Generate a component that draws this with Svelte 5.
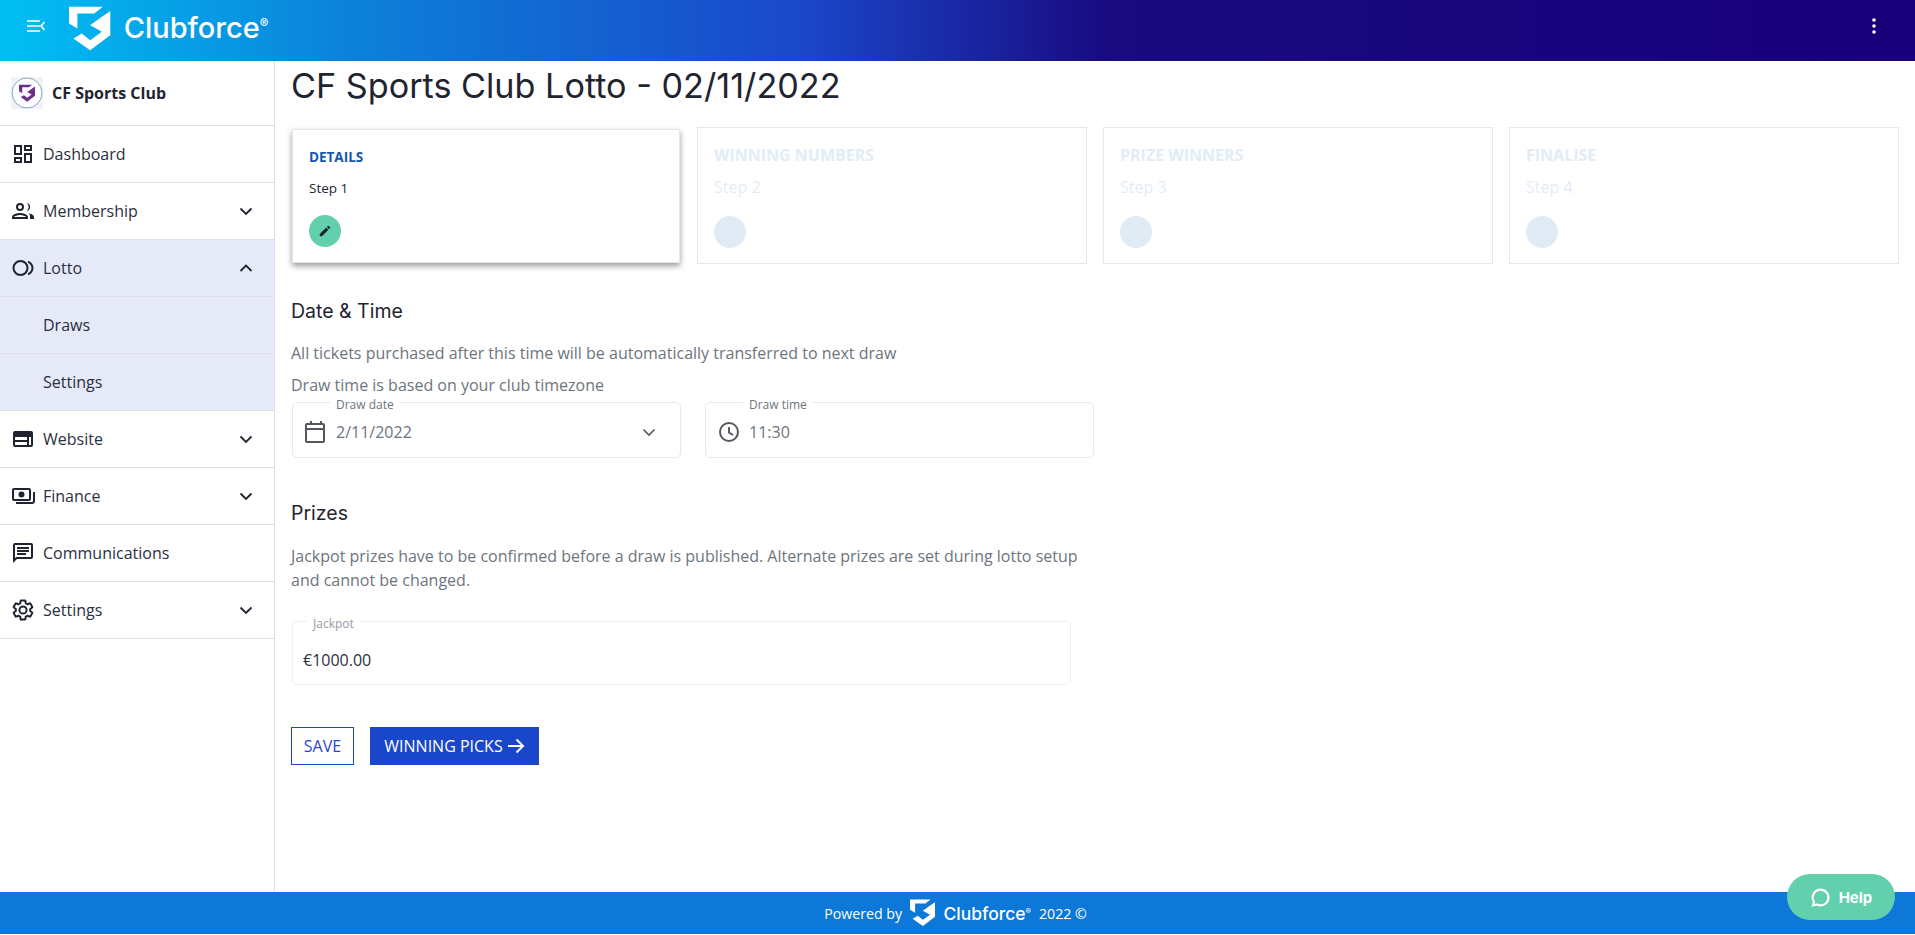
<script>
	const menu = [
		{ label: 'Dashboard', icon: 'dash' },
		{ label: 'Membership', icon: 'people', chevron: 'down' },
		{ label: 'Lotto', icon: 'lotto', chevron: 'up', active: true },
		{ label: 'Draws', sub: true, active: true },
		{ label: 'Settings', sub: true, active: true },
		{ label: 'Website', icon: 'web', chevron: 'down' },
		{ label: 'Finance', icon: 'money', chevron: 'down' },
		{ label: 'Communications', icon: 'chat' },
		{ label: 'Settings', icon: 'gear', chevron: 'down' }
	];
	const steps = [
		{ title: 'DETAILS', step: 'Step 1', current: true },
		{ title: 'WINNING NUMBERS', step: 'Step 2' },
		{ title: 'PRIZE WINNERS', step: 'Step 3' },
		{ title: 'FINALISE', step: 'Step 4' }
	];
	const shieldTop = 'M0 2H101L75 22H25V67L0 52Z';
	const shieldBottom = 'M123 15V87L63 132L13 97L38 82L63 102L98 77L63 57L98 32Z';
</script>

{#snippet logo(h)}
	<svg class="shield" height={h} width={h * 124 / 137} viewBox="0 0 124 137" fill="#fff">
		<path d={shieldTop} /><path d={shieldBottom} />
	</svg>
{/snippet}

{#snippet icon(name)}
	<svg class="icon" viewBox="0 0 24 24" fill="#1f2430">
		{#if name === 'dash'}
			<path d="M3 3h8v10H3V3zm2 2v6h4V5H5zm8-2h8v6h-8V3zm2 2v2h4V5h-4zM13 11h8v10h-8V11zm2 2v6h4v-6h-4zM3 15h8v6H3v-6zm2 2v2h4v-2H5z" />
		{:else if name === 'people'}
			<path d="M9 12a4 4 0 1 0 0-8 4 4 0 0 0 0 8zm0-6a2 2 0 1 1 0 4 2 2 0 0 1 0-4zm0 8c-2.7 0-8 1.3-8 4v2h16v-2c0-2.7-5.3-4-8-4zm-6 4c.3-.9 3.8-2 6-2s5.700 1.100 6 2H3zm13-6.100a4 4 0 0 0 0-7.800 5.900 5.900 0 0 1 0 7.800zM17.500 14.300c1.400.9 1.500 2.300 1.500 3.700v2h4v-2c0-2.200-3.300-3.400-5.500-3.700z" />
		{:else if name === 'lotto'}
			<path fill-rule="evenodd" d="M9.500 4a8 8 0 1 1 0 16 8 8 0 0 1 0-16zm0 2a6 6 0 1 0 0 12 6 6 0 0 0 0-12z" />
			<path d="M17.500 4.800c3 1.400 5 4 5 7.200s-2 5.800-5 7.200l-.9-1.800c2.200-1.100 3.900-3 3.900-5.400s-1.700-4.300-3.900-5.400l.9-1.800z" />
		{:else if name === 'web'}
			<path fill-rule="evenodd" d="M4 4h16a2 2 0 0 1 2 2v12a2 2 0 0 1-2 2H4a2 2 0 0 1-2-2V6a2 2 0 0 1 2-2zm0 6v3h12v-3H4zm0 5v3h12v-3H4zm14-5v8h2v-8h-2z" />
		{:else if name === 'money'}
			<path fill-rule="evenodd" d="M3 4h15a2 2 0 0 1 2 2v9a2 2 0 0 1-2 2H3a2 2 0 0 1-2-2V6a2 2 0 0 1 2-2zm0 2v9h15V6H3zm7.500 1.500a3 3 0 1 1 0 6 3 3 0 0 1 0-6zM22 8h2v9a3 3 0 0 1-3 3H5v-2h16a1 1 0 0 0 1-1V8z" />
		{:else if name === 'chat'}
			<path fill-rule="evenodd" d="M4 2h16a2 2 0 0 1 2 2v12a2 2 0 0 1-2 2H6l-4 4V4a2 2 0 0 1 2-2zm0 2v13.200L5.200 16H20V4H4zm2 2h12v2H6V6zm0 3h12v2H6V9zm0 3h9v2H6v-2z" />
		{:else if name === 'gear'}
			<path fill="none" stroke="#1f2430" stroke-width="2" d="M19.140 12.940c.04-.3.06-.61.06-.94 0-.32-.02-.64-.07-.94l2.030-1.580c.18-.14.23-.41.12-.61l-1.920-3.320c-.12-.22-.37-.29-.59-.22l-2.390.96c-.5-.38-1.030-.7-1.620-.94l-.36-2.540c-.04-.24-.24-.41-.48-.41h-3.840c-.24 0-.43.17-.47.41l-.36 2.540c-.59.24-1.130.57-1.620.94l-2.390-.96c-.22-.08-.47 0-.59.22L2.740 8.870c-.12.21-.08.47.12.61l2.030 1.580c-.05.3-.09.63-.09.94s.02.64.07.94l-2.030 1.580c-.18.14-.23.41-.12.61l1.920 3.320c.12.22.37.29.59.22l2.390-.96c.5.38 1.030.7 1.620.94l.36 2.540c.05.24.24.41.48.41h3.840c.24 0 .44-.17.47-.41l.36-2.540c.59-.24 1.130-.56 1.620-.94l2.390.96c.22.08.47 0 .59-.22l1.920-3.320c.12-.22.07-.47-.12-.61l-2.010-1.580zM12 15.600c-1.980 0-3.600-1.620-3.600-3.600s1.620-3.600 3.600-3.600 3.600 1.620 3.600 3.600-1.620 3.600-3.600 3.600z" />
		{/if}
	</svg>
{/snippet}

{#snippet chevron(dir)}
	<svg class="chev" viewBox="0 0 24 24" fill="none" stroke="#1f2430" stroke-width="1.800">
		<path d={dir === 'up' ? 'M6.500 15l5.500-5.500 5.500 5.500' : 'M6.500 9.500l5.500 5.500 5.500-5.500'} />
	</svg>
{/snippet}

<div class="page">
	<header class="topbar">
		<svg class="burger" viewBox="0 0 18 12" fill="none" stroke="#fff" stroke-width="1.600">
			<path d="M0 1h13M0 6h13M0 11h13M17.500 2l-3.500 4 3.500 4" />
		</svg>
		{@render logo(46)}
		<span class="brand">Clubforce<sup>®</sup></span>
		<span class="grow"></span>
		<svg class="kebab" viewBox="0 0 4 16" fill="#fff">
			<circle cx="2" cy="2" r="1.800" /><circle cx="2" cy="8" r="1.800" /><circle cx="2" cy="14" r="1.800" />
		</svg>
	</header>

	<div class="body">
		<aside class="sidebar">
			<div class="club">
				<svg class="crest" viewBox="0 0 32 32">
					<rect width="32" height="32" fill="#f3f3f6" />
					<circle cx="16" cy="16" r="15" fill="#fff" stroke="#5f8fc0" stroke-width="0.800" />
					<g transform="translate(8 7.500) scale(0.130)" fill="#6b2f8f">
						<path d={shieldTop} /><path d={shieldBottom} />
					</g>
				</svg>
				<span>CF Sports Club</span>
			</div>
			<nav>
				{#each menu as item}
					<a class="item" class:active={item.active} class:sub={item.sub} href="#top">
						{#if item.icon}{@render icon(item.icon)}{/if}
						<span class="label">{item.label}</span>
						{#if item.chevron}{@render chevron(item.chevron)}{/if}
					</a>
				{/each}
			</nav>
		</aside>

		<main class="content">
			<h1>CF Sports Club Lotto - 02/11/2022</h1>

			<div class="steps">
				{#each steps as s}
					<div class="step" class:current={s.current}>
						<div class="step-title">{s.title}</div>
						<div class="step-sub">{s.step}</div>
						<div class="dot">
							{#if s.current}
								<svg viewBox="0 0 24 24" width="14" height="14" fill="#1f2430">
									<path d="M3 17.250V21h3.750L17.800 9.940l-3.750-3.750L3 17.250zM20.700 7.040a1 1 0 0 0 0-1.410l-2.340-2.340a1 1 0 0 0-1.410 0l-1.830 1.830 3.750 3.750 1.830-1.830z" />
								</svg>
							{/if}
						</div>
					</div>
				{/each}
			</div>

			<h2 class="first">Date &amp; Time</h2>
			<p class="note">All tickets purchased after this time will be automatically transferred to next draw</p>
			<p class="note tight">Draw time is based on your club timezone</p>

			<div class="fields">
				<div class="field date">
					<span class="legend">Draw date</span>
					<svg class="ficon" viewBox="1 0 24 24" fill="#55585e">
						<path fill-rule="evenodd" d="M7 1h2v2h8V1h2v2h1a2 2 0 0 1 2 2v16a2 2 0 0 1-2 2H4a2 2 0 0 1-2-2V5a2 2 0 0 1 2-2h3V1zM4 10v11h16V10H4zm0-5v3h16V5H4z" />
					</svg>
					<span class="value">2/11/2022</span>
					<svg class="fchev" viewBox="0 0 24 24" fill="none" stroke="#55585e" stroke-width="1.600"><path d="M6.500 9.500l5.500 5.500 5.500-5.500" /></svg>
				</div>
				<div class="field time">
					<span class="legend">Draw time</span>
					<svg class="ficon" viewBox="0 0 24 24" fill="none" stroke="#55585e" stroke-width="2">
						<circle cx="12" cy="12" r="9" /><path d="M12 7v5.500l4 2.500" />
					</svg>
					<span class="value">11:30</span>
				</div>
			</div>

			<h2 class="second">Prizes</h2>
			<p class="note wrap">Jackpot prizes have to be confirmed before a draw is published. Alternate prizes are set during lotto setup and cannot be changed.</p>

			<div class="field jackpot">
				<span class="legend">Jackpot</span>
				<span class="value dark">€1000.00</span>
			</div>

			<div class="actions">
				<button class="save">SAVE</button>
				<button class="next">
					WINNING PICKS
					<svg viewBox="0 0 18 18" width="18" height="18" fill="none" stroke="#fff" stroke-width="2"><path d="M1 9h15M9.500 2.500L16 9l-6.500 6.500" /></svg>
				</button>
			</div>
		</main>
	</div>

	<footer class="footer">
		<span>Powered by</span>
		{@render logo(28)}
		<span class="foot-brand">Clubforce<sup>®</sup></span>
		<span>2022 ©</span>
	</footer>

	<button class="help">
		<svg viewBox="0 0 24 24" width="21" height="21" fill="none" stroke="#fff" stroke-width="2.400">
			<path d="M12 3a9 9 0 1 1-4 17l-4.500 1 1-4.200A9 9 0 0 1 12 3z" />
		</svg>
		Help
	</button>
</div>

<style>
	:global(body) {
		margin: 0;
		background: #fff;
		font-family: 'Open Sans', sans-serif;
		color: #1f2430;
	}

	.page {
		height: 935px;
		display: flex;
		flex-direction: column;
		overflow: hidden;
		position: relative;
	}

	.topbar {
		height: 61px;
		flex: none;
		display: flex;
		align-items: center;
		padding-left: 27px;
		padding-right: 39px;
		background: linear-gradient(90deg, #00c0f3 0%, #0c82da 18%, #1a47c9 42%, #190a80 58%, #17007a 100%);
	}

	.burger {
		width: 18px;
		height: 12px;
		margin-right: 24px;
		margin-bottom: 9px;
	}

	.topbar .shield {
		margin-bottom: 3px;
	}

	.shield {
		flex: none;
	}

	.brand {
		font-family: 'Inter', sans-serif;
		font-size: 29px;
		font-weight: 500;
		color: #fff;
		margin-left: 13px;
		margin-bottom: 5px;
		line-height: 30px;
	}

	.brand sup {
		font-size: 13px;
		vertical-align: 10px;
		line-height: 0;
	}

	.grow {
		flex: 1;
	}

	.kebab {
		width: 4px;
		height: 16px;
		margin-bottom: 9px;
	}

	.body {
		flex: 1;
		display: flex;
		min-height: 0;
	}

	.sidebar {
		width: 274px;
		flex: none;
		border-right: 1px solid #dcdfe6;
		background: #fff;
	}

	.club {
		height: 64px;
		display: flex;
		align-items: center;
		gap: 9px;
		padding-left: 11px;
		border-bottom: 1px solid #dcdfe6;
		font-size: 16px;
		font-weight: 700;
	}

	.crest {
		width: 32px;
		height: 32px;
	}

	.item {
		height: 56px;
		display: flex;
		align-items: center;
		padding-left: 11px;
		padding-right: 16px;
		border-bottom: 1px solid #dcdfe6;
		color: #2b3040;
		font-size: 16px;
		text-decoration: none;
	}

	.item.active {
		background: #e6e9f8;
	}

	.item.sub {
		padding-left: 43px;
	}

	.icon {
		width: 24px;
		height: 24px;
		margin-right: 8px;
		flex: none;
	}

	.label {
		flex: 1;
	}

	.chev {
		width: 24px;
		height: 24px;
	}

	.content {
		flex: 1;
		padding-left: 16px;
		min-width: 0;
	}

	h1 {
		margin: 0;
		padding-top: 3px;
		font-family: 'Inter', sans-serif;
		font-weight: 400;
		font-size: 34.200px;
		line-height: 44px;
		color: #1f2430;
	}

	.steps {
		display: flex;
		gap: 16px;
		margin-top: 19px;
	}

	.step {
		flex: none;
		width: 390px;
		height: 137px;
		box-sizing: border-box;
		padding: 17px 16px 0;
		border: 1px solid #e8e8ea;
		color: #e2ecf7;
	}

	.step.current {
		margin: 2px 1px 1px;
		width: 388px;
		height: 134px;
		color: #1f2430;
		border-color: #e6e6e6;
		box-shadow: 0 3px 6px rgba(0, 0, 0, 0.4);
	}

	.step-title {
		font-size: 16px;
		font-weight: 700;
		line-height: 20px;
	}

	.current .step-title {
		color: #1258ad;
		font-size: 13.500px;
	}

	.step-sub {
		font-size: 16px;
		line-height: 20px;
		margin-top: 12px;
	}

	.current .step-sub {
		font-size: 13.500px;
		margin-top: 11px;
	}

	.dot {
		width: 32px;
		height: 32px;
		margin-top: 19px;
		border-radius: 50%;
		background: #e0ebf6;
		display: flex;
		align-items: center;
		justify-content: center;
	}

	.current .dot {
		margin-top: 17px;
		background: #62d0ad;
	}

	h2 {
		margin: 0;
		font-family: 'Inter', sans-serif;
		font-weight: 400;
		font-size: 19.500px;
		line-height: 24px;
		color: #1f2430;
	}

	h2.first {
		margin-top: 35px;
	}

	h2.second {
		margin-top: 43px;
	}

	.note {
		margin: 18px 0 0;
		font-size: 16px;
		line-height: 24px;
		color: #6c757d;
	}

	.note.tight {
		margin-top: 8px;
	}

	.note.wrap {
		margin-top: 19px;
		width: 795px;
	}

	.fields {
		display: flex;
		gap: 24px;
		margin-top: 5px;
		margin-left: 1px;
	}

	.field {
		position: relative;
		box-sizing: border-box;
		display: flex;
		align-items: center;
		height: 56px;
		border: 1px solid #e8e8ea;
		border-radius: 5px;
		padding-left: 11px;
		padding-top: 3px;
	}

	.field.date,
	.field.time {
		width: 389px;
	}

	.legend {
		position: absolute;
		top: -5px;
		left: 37px;
		padding: 0 6px;
		background: #fff;
		font-size: 12px;
		line-height: 13px;
		color: #6c757d;
	}

	.ficon {
		width: 24px;
		height: 24px;
		margin-right: 8px;
		flex: none;
	}

	.value {
		flex: 1;
		font-size: 16px;
		color: #6c757d;
	}

	.value.dark {
		color: #2b3040;
	}

	.fchev {
		width: 24px;
		height: 24px;
		margin-right: 19px;
	}

	.jackpot {
		width: 779px;
		height: 64px;
		margin-top: 29px;
		margin-left: 1px;
		padding-top: 14px;
		padding-left: 10px;
		border-color: #f0f0f2;
	}

	.jackpot .legend {
		left: 14px;
		color: #9a9ca6;
	}

	.actions {
		display: flex;
		gap: 16px;
		margin-top: 42px;
	}

	button {
		font-family: 'Open Sans', sans-serif;
		font-size: 16px;
		height: 38px;
		box-sizing: border-box;
		border-radius: 0;
		cursor: pointer;
	}

	.save {
		width: 63px;
		padding: 0;
		background: #fff;
		color: #2a45c8;
		border: 1px solid #1a47c9;
	}

	.next {
		width: 169px;
		padding: 0;
		background: #1a47c9;
		color: #fff;
		border: 0;
		display: flex;
		align-items: center;
		justify-content: center;
		gap: 4px;
	}

	.footer {
		height: 42px;
		flex: none;
		margin-bottom: 1px;
		padding-right: 4px;
		display: flex;
		align-items: center;
		justify-content: center;
		gap: 8px;
		background: #0e78d8;
		color: #fff;
		font-size: 14.200px;
	}

	.foot-brand {
		font-family: 'Inter', sans-serif;
		font-weight: 500;
		font-size: 17.500px;
	}

	.foot-brand sup {
		font-size: 8px;
		vertical-align: 6px;
		line-height: 0;
	}

	.help {
		position: absolute;
		right: 20px;
		bottom: 15px;
		width: 108px;
		height: 46px;
		padding: 0;
		border: 0;
		border-radius: 23px;
		background: #62d0ad;
		color: #fff;
		font-family: 'Inter', sans-serif;
		font-weight: 700;
		font-size: 15px;
		display: flex;
		align-items: center;
		justify-content: center;
		gap: 8px;
	}
</style>
